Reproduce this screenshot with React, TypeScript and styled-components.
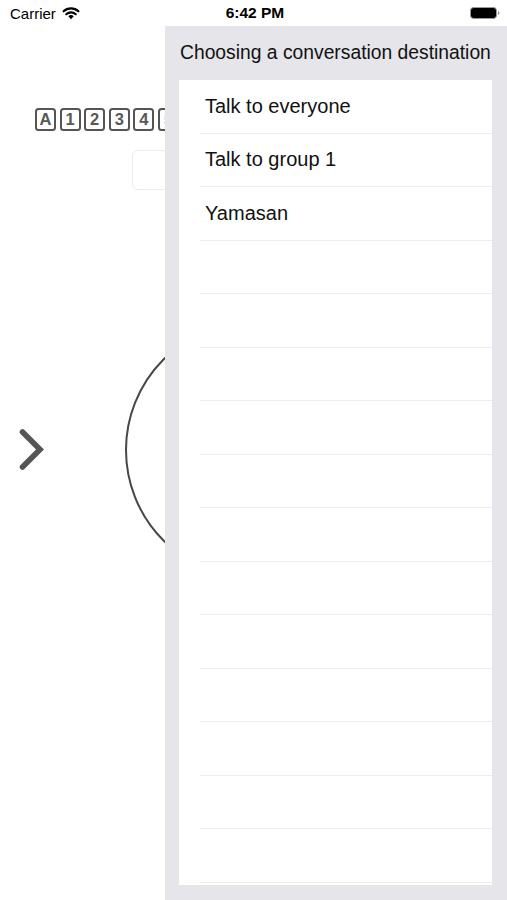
import React from "react";
import styled, { createGlobalStyle } from "styled-components";

const Global = createGlobalStyle`
  html, body { margin: 0; padding: 0; background: #ffffff; }
  body { font-family: "Liberation Sans", Arial, sans-serif; }
  #root { width: 507px; height: 900px; overflow: hidden; position: relative; }
`;

const Screen = styled.div`
  position: relative;
  width: 507px;
  height: 900px;
  overflow: hidden;
  background: #ffffff;
  display: flex;
  flex-direction: column;
`;

const StatusBar = styled.div`
  height: 26px;
  display: grid;
  grid-template-columns: 1fr auto 1fr;
  align-items: center;
  padding: 0 7px 0 10px;
  color: #000;
`;

const Carrier = styled.div`
  display: flex;
  align-items: center;
  gap: 6px;
  font-size: 15px;
`;

const Time = styled.div`
  font-size: 15.5px;
  font-weight: 700;
`;

const Battery = styled.div`
  justify-self: end;
  display: flex;
  align-items: center;
`;

const KeyRow = styled.div`
  display: flex;
  gap: 3.6px;
  margin: 82px 0 0 35px;
`;

const Key = styled.div`
  box-sizing: border-box;
  width: 21px;
  height: 23px;
  border: 2px solid #555;
  border-radius: 3.5px;
  display: flex;
  align-items: center;
  justify-content: center;
  font-size: 16.5px;
  font-weight: 700;
  color: #585858;
  flex: none;
`;

const Field = styled.div`
  box-sizing: border-box;
  width: 243px;
  height: 40px;
  margin: 19px 0 0 132px;
  border: 1px solid #ececec;
  border-radius: 6px;
`;

const Stage = styled.div`
  margin-top: 131px;
  display: grid;
  grid-template-columns: 1fr auto 1fr;
  align-items: center;
`;

const Back = styled.div`
  justify-self: start;
  padding-left: 18px;
  display: flex;
`;

const Ring = styled.div`
  box-sizing: border-box;
  width: 258px;
  height: 258px;
  border: 2px solid #474747;
  border-radius: 50%;
`;

const Drawer = styled.div`
  position: absolute;
  left: 165px;
  top: 26px;
  right: 0;
  bottom: 0;
  background: #e5e5ea;
  display: flex;
  flex-direction: column;
  padding: 0 15px 15px 14px;
`;

const DrawerTitle = styled.div`
  height: 54px;
  display: flex;
  align-items: center;
  padding-left: 1px;
  font-size: 19.3px;
  color: #111;
  white-space: nowrap;
`;

const List = styled.div`
  flex: 1;
  background: #ffffff;
  overflow: hidden;
  padding-left: 21px;
`;

const Row = styled.div`
  box-sizing: border-box;
  height: 53.5px;
  border-bottom: 1.2px solid #ececee;
  display: flex;
  align-items: center;
  padding-left: 5px;
  font-size: 20px;
  color: #111;
`;

const WifiIcon = () => (
  <svg width="18" height="14" viewBox="0 0 18 14">
    <path d="M9 13.2 L6.3 10.3 A3.9 3.9 0 0 1 11.7 10.3 Z" fill="#000" />
    <path d="M4.3 8.2 A6.8 6.8 0 0 1 13.7 8.2" stroke="#000" strokeWidth="2.2" fill="none" strokeLinecap="round" />
    <path d="M1.6 5.3 A10.6 10.6 0 0 1 16.4 5.3" stroke="#000" strokeWidth="2.2" fill="none" strokeLinecap="round" />
  </svg>
);

const BatteryIcon = () => (
  <svg width="30" height="12" viewBox="0 0 30 12">
    <rect x="0.5" y="0.5" width="26" height="11" rx="3.2" fill="#000" stroke="#9a9a9a" strokeWidth="1" />
    <path d="M27.8 4 Q29.5 4 29.5 6 Q29.5 8 27.8 8 Z" fill="#9a9a9a" />
  </svg>
);

const Chevron = () => (
  <svg width="26" height="46" viewBox="0 0 26 46">
    <polyline points="4.5,5 22,22.5 4.5,40" fill="none" stroke="#555" strokeWidth="5.6" strokeLinecap="round" strokeLinejoin="miter" />
  </svg>
);

const keys = ["A", "1", "2", "3", "4", "5"];
const rows = ["Talk to everyone", "Talk to group 1", "Yamasan", "", "", "", "", "", "", "", "", "", "", "", "", ""];

export default function App() {
  return (
    <>
      <Global />
      <Screen>
        <StatusBar>
          <Carrier>
            Carrier
            <WifiIcon />
          </Carrier>
          <Time>6:42 PM</Time>
          <Battery>
            <BatteryIcon />
          </Battery>
        </StatusBar>
        <KeyRow>
          {keys.map((k) => (
            <Key key={k}>{k}</Key>
          ))}
        </KeyRow>
        <Field />
        <Stage>
          <Back>
            <Chevron />
          </Back>
          <Ring />
          <div />
        </Stage>
        <Drawer>
          <DrawerTitle>Choosing a conversation destination</DrawerTitle>
          <List>
            {rows.map((r, i) => (
              <Row key={i}>{r}</Row>
            ))}
          </List>
        </Drawer>
      </Screen>
    </>
  );
}
